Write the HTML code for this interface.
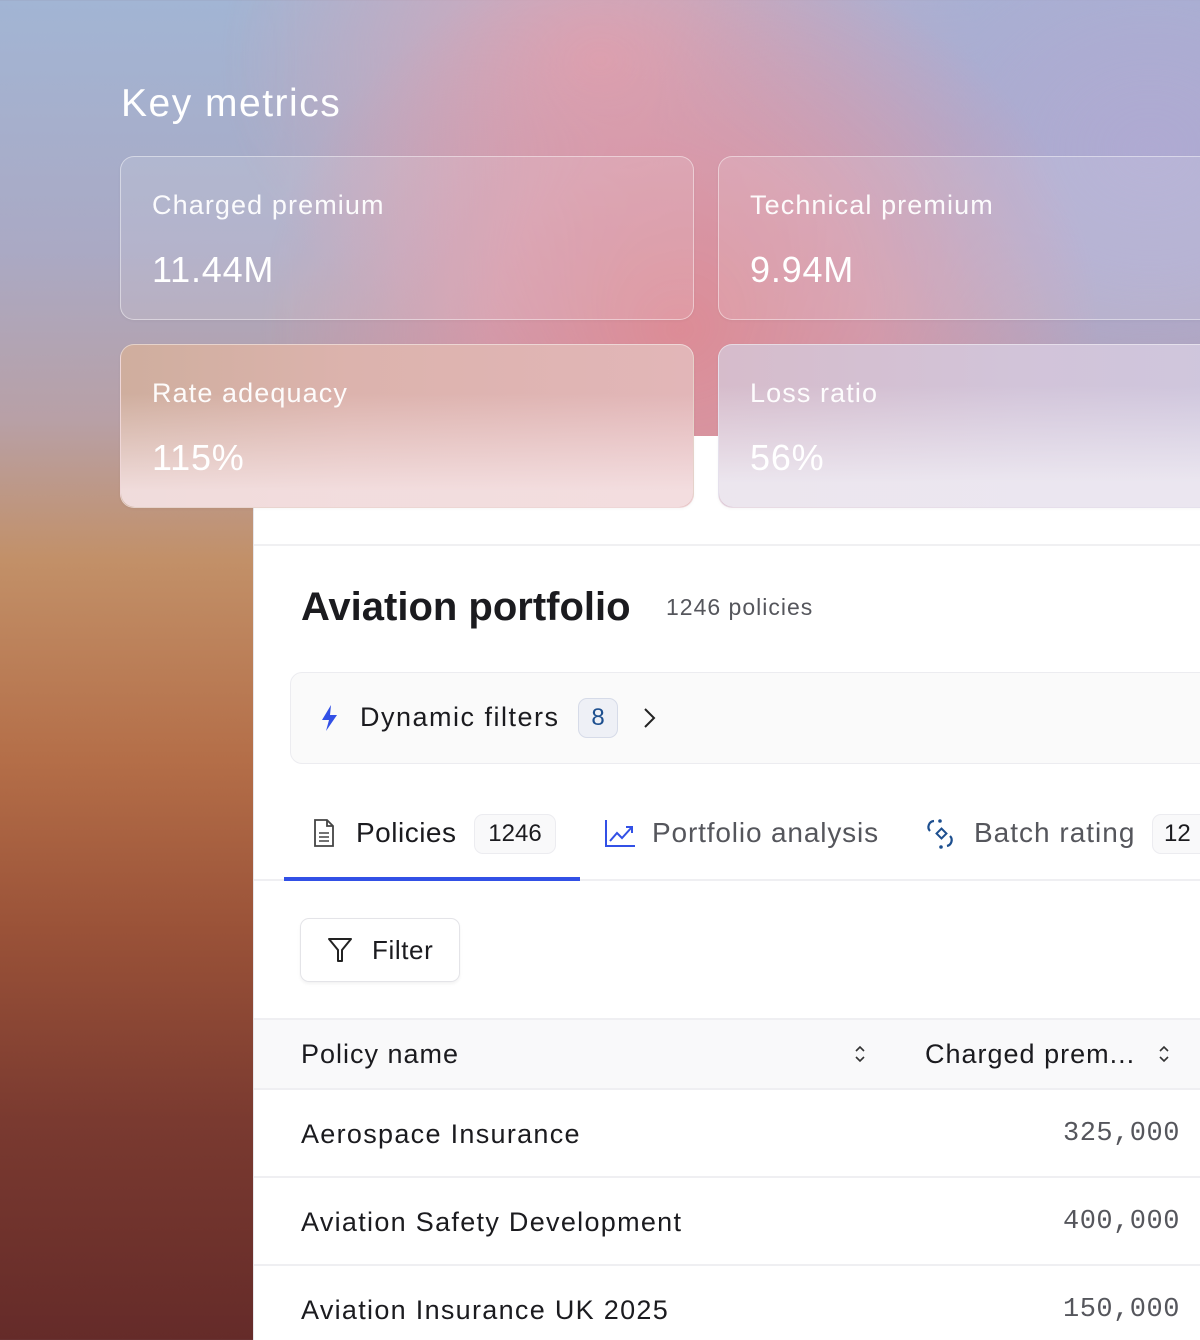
<!DOCTYPE html>
<html style="width:1200px;height:1340px;overflow:hidden"><head><meta charset="utf-8"><style>
*{margin:0;padding:0;box-sizing:border-box}
body{width:1200px;height:1340px;overflow:hidden;position:relative;font-family:"Liberation Sans",sans-serif;
background:linear-gradient(180deg,#a2b5d4 0px,#aaa9c4 250px,#b8a0a6 420px,#c29068 560px,#b46e48 760px,#9a5238 930px,#7a3a30 1120px,#652b29 1340px);}
.top{position:absolute;left:0;top:0;width:1200px;height:520px;
background:radial-gradient(ellipse 420px 380px at 680px 330px,rgba(220,140,150,1),rgba(220,150,165,0.8) 45%,rgba(215,160,180,0) 100%),
radial-gradient(ellipse 500px 420px at 1150px 150px,rgba(175,170,210,1),rgba(180,170,205,0) 100%),
radial-gradient(ellipse 380px 300px at 600px 60px,rgba(220,165,180,1),rgba(220,165,180,0) 100%);
-webkit-mask:linear-gradient(90deg,rgba(0,0,0,0.2) 0,#000 300px);}
.panel{position:absolute;left:253px;top:436px;width:960px;height:904px;background:#fff;border-left:1px solid #e6e6ea}
h1.km{position:absolute;left:121px;top:82px;font-size:39px;font-weight:400;color:#fff;letter-spacing:1.5px}
.card{position:absolute;z-index:2;width:574px;height:164px;border-radius:14px;border:1.5px solid rgba(255,255,255,0.45);
background:rgba(255,255,255,0.12);color:#fff;box-shadow:0 1px 3px rgba(0,0,0,0.04)}
.card .l{position:absolute;left:31px;top:33px;font-size:27px;letter-spacing:1.1px;color:rgba(255,255,255,0.95)}
.card .v{position:absolute;left:31px;top:92px;font-size:36px;letter-spacing:0.8px}
.c3{background:linear-gradient(90deg,#cfae9e 0%,#dcb3ad 40%,#e2b6b8 100%)}
.c3::after{content:"";position:absolute;inset:0;border-radius:14px;background:linear-gradient(180deg,rgba(255,255,255,0) 30%,rgba(246,228,230,0.85) 90%)}
.c4{background:linear-gradient(90deg,#d6bccb 0%,#d2c4d9 60%,#cfc6dd 100%)}
.c4::after{content:"";position:absolute;inset:0;border-radius:14px;background:linear-gradient(180deg,rgba(255,255,255,0) 25%,rgba(238,234,242,0.9) 85%)}
.card .l,.card .v{z-index:3}
.abs{position:absolute}
.t{letter-spacing:1px}
</style></head><body>
<div class="top"></div>
<div class="panel"></div>
<h1 class="km">Key metrics</h1>
<div class="card" style="left:120px;top:156px"><div class="l">Charged premium</div><div class="v">11.44M</div></div>
<div class="card" style="left:718px;top:156px;width:500px"><div class="l">Technical premium</div><div class="v">9.94M</div></div>
<div class="card c3" style="left:120px;top:344px"><div class="l">Rate adequacy</div><div class="v">115%</div></div>
<div class="card c4" style="left:718px;top:344px;width:500px"><div class="l">Loss ratio</div><div class="v">56%</div></div>

<div class="abs" style="left:254px;top:544px;width:946px;height:2px;background:#f0f0f2"></div>
<div class="abs" style="left:301px;top:585px;font-size:40px;font-weight:700;color:#1b1b1f">Aviation portfolio</div>
<div class="abs t" style="left:666px;top:594px;font-size:23px;color:#55565c">1246 policies</div>

<div class="abs" style="left:290px;top:672px;width:930px;height:92px;border:1.5px solid #ececf0;border-radius:12px;background:#fafafa"></div>
<svg class="abs" style="left:318px;top:704px" width="24" height="28" viewBox="0 0 24 28"><path d="M13 1 L4 16 H11 L8 27 L19 11 H12 Z" fill="#3250e6"/></svg>
<div class="abs" style="left:360px;top:702px;font-size:27px;color:#1b1b1f;letter-spacing:1.5px">Dynamic filters</div>
<div class="abs" style="left:578px;top:698px;width:40px;height:40px;border:1.5px solid #d6dbe8;border-radius:9px;background:#eef0f6;color:#1d4f8f;font-size:24px;text-align:center;line-height:37px">8</div>
<svg class="abs" style="left:640px;top:706px" width="20" height="24" viewBox="0 0 20 24"><path d="M5 3 L14 12 L5 21" fill="none" stroke="#222" stroke-width="2"/></svg>

<svg class="abs" style="left:312px;top:818px" width="24" height="30" viewBox="0 0 24 30"><path d="M3 2 H15 L21 8 V28 H3 Z M15 2 V8 H21" fill="none" stroke="#444" stroke-width="1.8"/><path d="M7 15 H17 M7 19 H17 M7 23 H17" stroke="#444" stroke-width="1.6"/></svg>
<div class="abs" style="left:356px;top:817px;font-size:28px;color:#1b1b1f;letter-spacing:0.5px">Policies</div>
<div class="abs" style="left:474px;top:814px;width:82px;height:40px;border:1.5px solid #ececf0;border-radius:9px;background:#f9f9fa;color:#1b1b1f;font-size:24px;text-align:center;line-height:37px">1246</div>
<svg class="abs" style="left:604px;top:818px" width="32" height="30" viewBox="0 0 32 30"><path d="M2 2 V28 H31" fill="none" stroke="#3250e6" stroke-width="2"/><path d="M6 23 L13 15 L18 20 L28 9 M22 9 H28 V15" fill="none" stroke="#3250e6" stroke-width="2"/></svg>
<div class="abs" style="left:652px;top:817px;font-size:28px;color:#55565c;letter-spacing:0.85px">Portfolio analysis</div>
<svg class="abs" style="left:926px;top:818px" width="32" height="32" viewBox="0 0 32 32"><path d="M8 3 A6 6 0 0 0 4 13" fill="none" stroke="#1d4f8f" stroke-width="2.2"/><path d="M24 18 A6 6 0 0 1 21 28" fill="none" stroke="#1d4f8f" stroke-width="2.2"/><rect x="12" y="12" width="7" height="7" transform="rotate(45 15.5 15.5)" fill="none" stroke="#1d4f8f" stroke-width="2"/><circle cx="14" cy="3" r="1.8" fill="#1d4f8f"/><circle cx="15" cy="29" r="1.8" fill="#1d4f8f"/></svg>
<div class="abs" style="left:974px;top:817px;font-size:28px;color:#55565c;letter-spacing:1px">Batch rating</div>
<div class="abs" style="left:1152px;top:814px;width:70px;height:40px;border:1.5px solid #ececf0;border-radius:9px;background:#f9f9fa;color:#1b1b1f;font-size:24px;padding-left:11px;line-height:37px">12</div>
<div class="abs" style="left:254px;top:879px;width:946px;height:2px;background:#efeff2"></div>
<div class="abs" style="left:284px;top:877px;width:296px;height:4px;background:#3250e6"></div>

<div class="abs" style="left:300px;top:918px;width:160px;height:64px;border:1.5px solid #e4e4e8;border-radius:9px;box-shadow:0 2px 3px rgba(0,0,0,0.05)"></div>
<svg class="abs" style="left:326px;top:936px" width="28" height="28" viewBox="0 0 28 28"><path d="M3 3 H25 L16 14 V25 H12 V14 Z" fill="none" stroke="#222" stroke-width="2" stroke-linejoin="round"/></svg>
<div class="abs" style="left:372px;top:935px;font-size:26px;color:#1b1b1f;letter-spacing:0.6px">Filter</div>

<div class="abs" style="left:254px;top:1018px;width:946px;height:72px;background:#f9f9fa;border-top:2px solid #efeff2;border-bottom:2px solid #efeff2"></div>
<div class="abs t" style="left:301px;top:1039px;font-size:27px;color:#1b1b1f">Policy name</div>
<svg class="abs" style="left:852px;top:1043px" width="16" height="22" viewBox="0 0 16 22"><path d="M4 8 L8 4 L12 8 M4 14 L8 18 L12 14" fill="none" stroke="#333" stroke-width="1.6"/></svg>
<div class="abs t" style="left:925px;top:1039px;font-size:27px;color:#1b1b1f">Charged prem...</div>
<svg class="abs" style="left:1156px;top:1043px" width="16" height="22" viewBox="0 0 16 22"><path d="M4 8 L8 4 L12 8 M4 14 L8 18 L12 14" fill="none" stroke="#333" stroke-width="1.6"/></svg>

<div class="abs" style="left:301px;top:1119px;font-size:27px;color:#1b1b1f;letter-spacing:1.3px">Aerospace Insurance</div>
<div class="abs" style="left:1063px;top:1119px;font-size:27px;color:#55565c;font-family:'Liberation Mono',monospace;letter-spacing:0.5px">325,000</div>
<div class="abs" style="left:254px;top:1176px;width:946px;height:2px;background:#efeff2"></div>
<div class="abs" style="left:301px;top:1207px;font-size:27px;color:#1b1b1f;letter-spacing:1.3px">Aviation Safety Development</div>
<div class="abs" style="left:1063px;top:1207px;font-size:27px;color:#55565c;font-family:'Liberation Mono',monospace;letter-spacing:0.5px">400,000</div>
<div class="abs" style="left:254px;top:1264px;width:946px;height:2px;background:#efeff2"></div>
<div class="abs" style="left:301px;top:1295px;font-size:27px;color:#1b1b1f;letter-spacing:1.3px">Aviation Insurance UK 2025</div>
<div class="abs" style="left:1063px;top:1295px;font-size:27px;color:#55565c;font-family:'Liberation Mono',monospace;letter-spacing:0.5px">150,000</div>
</body></html>
